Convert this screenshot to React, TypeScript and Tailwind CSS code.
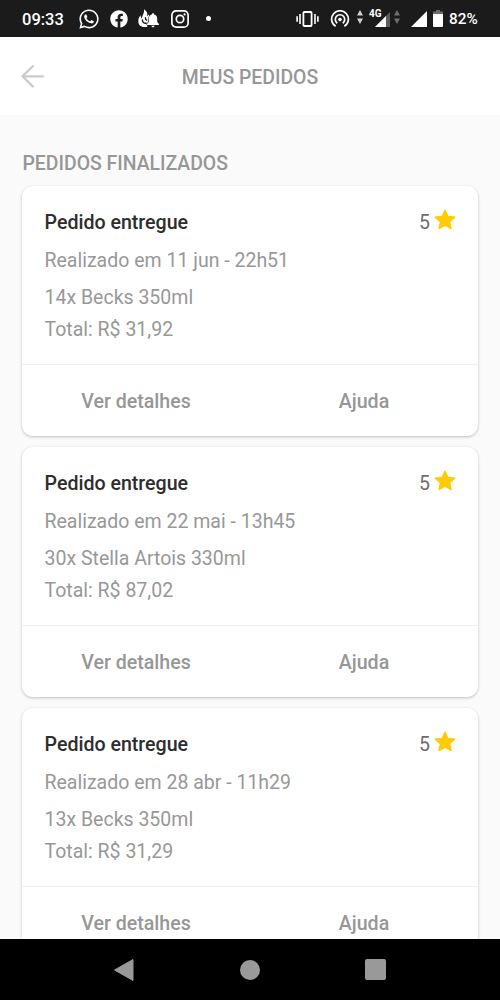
import { FaFacebook, FaWhatsapp } from "react-icons/fa";

const orders = [
  {
    status: "Pedido entregue",
    date: "Realizado em 11 jun - 22h51",
    item: "14x Becks 350ml",
    total: "Total: R$ 31,92",
    rating: 5,
  },
  {
    status: "Pedido entregue",
    date: "Realizado em 22 mai - 13h45",
    item: "30x Stella Artois 330ml",
    total: "Total: R$ 87,02",
    rating: 5,
  },
  {
    status: "Pedido entregue",
    date: "Realizado em 28 abr - 11h29",
    item: "13x Becks 350ml",
    total: "Total: R$ 31,29",
    rating: 5,
  },
];

type Order = (typeof orders)[number];

function DataArrows({ className }: { className: string }) {
  return (
    <svg viewBox="0 0 6 14" className={`h-3.5 w-1.5 shrink-0 ${className}`} fill="currentColor">
      <path d="M3 0 6 5.6H0zM0 8.4h6L3 14z" />
    </svg>
  );
}

function StatusBar() {
  return (
    <div className="flex h-[37px] shrink-0 items-center justify-between bg-[#1b1b1b] px-[22px] text-white">
      <div className="flex items-center">
        <span className="w-[42px] whitespace-nowrap pt-[3px] text-[16.5px] font-medium leading-none">09:33</span>
        <FaWhatsapp className="ml-[14px] h-[22px] w-[22px]" />
        <FaFacebook className="ml-[10px] h-[18px] w-[18px]" />
        {/* flame with a bell in front */}
        <svg viewBox="0 0 21 19" className="ml-[10px] h-[19px] w-[21px]">
          <path
            fill="currentColor"
            d="M6 .3c2.800 1.900 3.800 4 3.200 7 .8-.4 1.200-1.100 1.200-2 1.200 1.400 1.400 3 .8 4.700L9.700 13l-.5 5H6.500C2.500 18 .3 15.600.3 12.200c0-2.400.8-4.200 2.300-5.900 0 1.700.3 2.500 1.200 3.200C4 6.500 6.600 4.500 6 .3z"
          />
          <path fill="none" stroke="#1b1b1b" strokeWidth="1.4" strokeLinecap="round" d="M4.400 11c.1 2.300 1.500 3.500 3.800 3.300M7.500 8.800c-.2 1.200.2 1.900 1.200 2.300" />
          <path
            fill="currentColor"
            stroke="#1b1b1b"
            strokeWidth="1"
            paintOrder="stroke"
            d="M15 4.300c.7 0 1.100.5 1.100 1.100 2.100.5 3.100 2 3.100 4v3.700l1.700 2v1H9.100v-1l1.700-2V9.400c0-2 1-3.500 3.100-4 0-.6.4-1.100 1.100-1.100zM13.400 16.800h3.200c0 .9-.7 1.500-1.600 1.500s-1.600-.6-1.600-1.500z"
          />
        </svg>
        <svg viewBox="0 0 18 18" className="ml-3 h-[18px] w-[18px]" fill="none" stroke="currentColor" strokeWidth="1.7">
          <rect x="0.9" y="0.9" width="16.2" height="16.2" rx="4.2" />
          <circle cx="9" cy="9" r="3.7" />
          <circle cx="13.6" cy="4.4" r="1.1" fill="currentColor" stroke="none" />
        </svg>
        <span className="ml-[17px] h-[5px] w-[5px] rounded-full bg-white" />
      </div>
      <div className="flex items-center">
        <svg viewBox="0 0 23 16" className="h-4 w-[23px] translate-y-px" fill="none" stroke="currentColor">
          <rect x="7.4" y="1" width="8.2" height="14" rx="1" strokeWidth="1.8" />
          <path strokeWidth="1.6" d="M4 3v10M1.100 5.200v5.600M19 3v10M21.900 5.200v5.600" />
        </svg>
        <svg viewBox="0 0 20 18" className="ml-[11px] h-[18px] w-5 translate-y-px" fill="none" stroke="currentColor" strokeWidth="1.7">
          <path d="M5.600 16.300a8.400 8.400 0 1 1 8.800 0" />
          <path d="M7.200 13.200a4.700 4.700 0 1 1 5.600 0" />
          <circle cx="10" cy="9.6" r="1.8" fill="currentColor" stroke="none" />
        </svg>
        <DataArrows className="ml-[7px] -translate-y-px text-[#d0d0d0]" />
        <div className="relative ml-[12px] flex">
          <svg viewBox="0 0 15 15" className="h-[15px] w-[15px] translate-y-px">
            <path fill="#5e5e5e" d="M15 0v15H0z" />
            <path fill="white" d="M11 4v11H0z" />
          </svg>
          <span className="absolute -left-[6px] -top-[2px] text-[10px] font-bold leading-none">4G</span>
        </div>
        <DataArrows className="ml-1 -translate-y-px text-[#6e6e6e]" />
        <svg viewBox="0 0 16 16" className="ml-[11px] h-4 w-4 translate-y-px" fill="currentColor">
          <path d="M16 0v16H0z" />
        </svg>
        <svg viewBox="0 0 10 17" className="ml-1.5 h-[17px] w-[10px]">
          <path fill="#6b6b6b" d="M3 0h4v1.600h3V5H0V1.600h3z" />
          <path fill="white" d="M0 4h10v12a1 1 0 0 1-1 1H1a1 1 0 0 1-1-1z" />
        </svg>
        <span className="ml-1.5 w-[29px] whitespace-nowrap pt-[3px] text-[15.3px] font-medium leading-none">82%</span>
      </div>
    </div>
  );
}

function Header() {
  return (
    <header className="relative flex h-[78px] shrink-0 items-center justify-center bg-white">
      <button aria-label="Voltar" className="absolute left-[21px] top-[28px] text-[#cbcbcb]">
        <svg viewBox="0 0 24 23" className="h-[23px] w-6" fill="none" stroke="currentColor" strokeWidth="2.3" strokeLinecap="round" strokeLinejoin="round">
          <path d="M22 11.300H1.500M11.800 1.200 1.500 11.300 11.800 21.400" />
        </svg>
      </button>
      <h1 className="pt-1 text-[19.4px] font-medium text-[#979797]">MEUS PEDIDOS</h1>
    </header>
  );
}

function OrderCard({ order }: { order: Order }) {
  return (
    <article className="flex h-[250px] shrink-0 flex-col rounded-[11px] bg-white shadow-[0_1px_3px_rgba(0,0,0,0.24)]">
      <div className="h-[178px] px-[22px] pt-[22px] text-[19.5px] text-[#989898]">
        <div className="flex h-[29px] items-center justify-between">
          <h3 className="pl-[0.5px] text-[19.6px] font-medium text-[#2d2d2d]">{order.status}</h3>
          <div className="flex items-center gap-1 text-[#6d6d6d]">
            <span>{order.rating}</span>
            <svg viewBox="0 0 22 21" className="-mt-1.5 h-[21px] w-[22px]" fill="#ffcb05" stroke="#ffcb05" strokeWidth="1.2" strokeLinejoin="round">
              <path d="m11 1 2.900 6.300 7 .8-5.200 4.700 1.400 6.900L11 16.300l-6.100 3.400 1.400-6.900L1.100 8.100l7-.8z" />
            </svg>
          </div>
        </div>
        <div className="mt-[9px] pl-[0.5px]">
          <p className="leading-[30px]">{order.date}</p>
          <p className="mt-[6px] leading-8">{order.item}</p>
          <p className="leading-8">{order.total}</p>
        </div>
      </div>
      <div className="grid flex-1 grid-cols-2 border-t border-[#f1f1f1] text-[19.6px] font-medium text-[#979797]">
        <button className="pt-[3px]">Ver detalhes</button>
        <button className="pt-[3px]">Ajuda</button>
      </div>
    </article>
  );
}

function NavigationBar() {
  return (
    <nav className="flex h-[61px] shrink-0 items-center justify-between bg-black px-[113px] text-[#999999]">
      <svg viewBox="0 0 22 24" className="h-6 w-[22px]" fill="currentColor" stroke="currentColor" strokeLinejoin="round">
        <path d="M20 1.500v21L1.500 12z" />
      </svg>
      <span className="h-5 w-5 rounded-full bg-[#999999]" />
      <span className="mr-px h-[21px] w-[21px] rounded-[2px] bg-[#999999]" />
    </nav>
  );
}

export default function App() {
  return (
    <div className="flex h-[1000px] w-[500px] flex-col overflow-hidden bg-[#fafafa] font-[Roboto,sans-serif]">
      <StatusBar />
      <Header />
      <main className="min-h-0 flex-1 overflow-hidden px-[22px] pt-[34px]">
        <h2 className="h-[37px] pl-[0.5px] text-[19.4px] font-medium leading-[29px] text-[#979797]">PEDIDOS FINALIZADOS</h2>
        <div className="flex flex-col gap-[11px]">
          {orders.map((order) => (
            <OrderCard key={order.date} order={order} />
          ))}
        </div>
      </main>
      <NavigationBar />
    </div>
  );
}
